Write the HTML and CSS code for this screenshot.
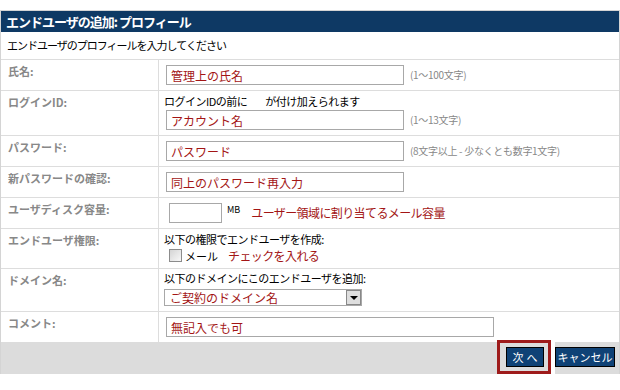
FILE: index.html
```html
<!DOCTYPE html>
<html lang="ja">
<head>
    <meta charset="UTF-8">
    <title>エンドユーザの追加: プロフィール</title>
    <link rel="stylesheet" href="styles.css">
</head>
<body>
    <div class="panel">
        <h1 class="panel-title">エンドユーザの追加: プロフィール</h1>
        <p class="panel-lead">エンドユーザのプロフィールを入力してください</p>

        <div class="row">
            <div class="label">氏名:</div>
            <div class="field">
                <div class="line">
                    <input class="text" type="text" value="管理上の氏名">
                    <span class="hint">(1〜100文字)</span>
                </div>
            </div>
        </div>

        <div class="row">
            <div class="label">ログインID:</div>
            <div class="field field-tall">
                <div class="note">ログインIDの前に<span class="blank"></span>が付け加えられます</div>
                <div class="line line-after">
                    <input class="text" type="text" value="アカウント名">
                    <span class="hint">(1〜13文字)</span>
                </div>
            </div>
        </div>

        <div class="row">
            <div class="label">パスワード:</div>
            <div class="field">
                <div class="line">
                    <input class="text" type="text" value="パスワード">
                    <span class="hint">(8文字以上 - 少なくとも数字1文字)</span>
                </div>
            </div>
        </div>

        <div class="row">
            <div class="label">新パスワードの確認:</div>
            <div class="field">
                <div class="line">
                    <input class="text" type="text" value="同上のパスワード再入力">
                </div>
            </div>
        </div>

        <div class="row">
            <div class="label">ユーザディスク容量:</div>
            <div class="field">
                <div class="line">
                    <input class="text text-small" type="text" value="">
                    <span class="unit">MB</span>
                    <span class="memo">ユーザー領域に割り当てるメール容量</span>
                </div>
            </div>
        </div>

        <div class="row">
            <div class="label">エンドユーザ権限:</div>
            <div class="field field-perm">
                <div class="note">以下の権限でエンドユーザを作成:</div>
                <div class="check-line">
                    <input class="check" type="checkbox">
                    <span>メール</span>
                    <span class="memo">チェックを入れる</span>
                </div>
            </div>
        </div>

        <div class="row">
            <div class="label">ドメイン名:</div>
            <div class="field field-domain">
                <div class="note">以下のドメインにこのエンドユーザを追加:</div>
                <div class="select">
                    <span class="select-value">ご契約のドメイン名</span>
                    <span class="select-arrow"><span class="tri"></span></span>
                </div>
            </div>
        </div>

        <div class="row">
            <div class="label">コメント:</div>
            <div class="field">
                <div class="line">
                    <input class="text text-wide" type="text" value="無記入でも可">
                </div>
            </div>
        </div>

        <div class="actions">
            <span class="mark"><button class="btn btn-next">次へ</button></span>
            <button class="btn btn-cancel">キャンセル</button>
        </div>
    </div>
</body>
</html>
```

FILE: styles.css
```css
body {
    margin: 0;
    background: #fff;
    font-family: "Noto Sans CJK JP", sans-serif;
    font-size: 11px;
    color: #000;
}

.panel {
    margin-top: 10px;
    border: 1px solid #d4d4d4;
    border-bottom: 0;
}

.panel-title {
    margin: 0;
    height: 21px;
    line-height: 21px;
    padding-left: 5px;
    background: #0e3964;
    color: #fff;
    font-size: 13px;
    font-weight: 700;
    letter-spacing: -1px;
}

.panel-lead {
    margin: 0;
    height: 27px;
    line-height: 26px;
    padding-left: 6px;
    letter-spacing: -1px;
}

.row {
    display: flex;
    border-top: 1px solid #dddddd;
}

.label {
    width: 158px;
    flex: none;
    box-sizing: border-box;
    padding: 4px 7px;
    line-height: 14px;
    border-right: 1px solid #dddddd;
    color: #888;
    font-weight: 700;
}

.field {
    flex: 1;
    padding: 5px 5px;
    line-height: 16px;
}

.field-tall { padding: 2px 5px 5px; }
.field-perm { padding: 2px 5px 4px; }
.field-domain { padding: 1px 5px 5px; }

.note {
    height: 16px;
    letter-spacing: -0.5px;
}

.blank {
    display: inline-block;
    width: 18px;
}

.line {
    display: flex;
    align-items: center;
    gap: 6px;
    height: 20px;
}

.line-after { margin-top: 1px; }

.text {
    width: 238px;
    height: 20px;
    margin: 0 0 0 2px;
    padding: 0 4px;
    box-sizing: border-box;
    border: 1px solid #a8a8a8;
    font-family: inherit;
    font-size: 12px;
    color: #a31515;
    background: #fff;
    outline: none;
}

.text-small {
    width: 53px;
    margin-left: 5px;
}

.text-wide { width: 328px; }

.hint {
    color: #888;
    font-size: 10px;
    letter-spacing: -0.3px;
}

.unit {
    align-self: flex-start;
    margin-left: -1px;
    font-size: 9px;
    line-height: 10px;
    margin-top: 2px;
}

.memo {
    color: #a31515;
    font-size: 12px;
    letter-spacing: -0.6px;
    margin-left: 5px;
}

.check-line {
    display: flex;
    align-items: center;
    height: 17px;
}

.check {
    appearance: none;
    width: 13px;
    height: 13px;
    margin: 0 3px 0 5px;
    box-sizing: border-box;
    border: 1px solid #8c8c8c;
    background: linear-gradient(135deg, #d4d4d4, #f8f8f8);
}

.check-line .memo { margin-left: 10px; }

.select {
    display: flex;
    align-items: center;
    width: 198px;
    height: 17px;
    margin-top: 3px;
    box-sizing: border-box;
    border: 1px solid #a8a8a8;
    background: #fff;
}

.select-value {
    flex: 1;
    padding-left: 5px;
    color: #a31515;
    font-size: 12px;
    line-height: 15px;
}

.select-arrow {
    display: flex;
    align-items: center;
    justify-content: center;
    width: 15px;
    height: 15px;
    box-sizing: border-box;
    border: 1px solid #888;
    background: #dedede;
}

.tri {
    width: 0;
    height: 0;
    border-left: 4px solid transparent;
    border-right: 4px solid transparent;
    border-top: 4px solid #000;
}

.actions {
    display: flex;
    justify-content: flex-end;
    align-items: flex-start;
    height: 32px;
    padding-right: 4px;
    background: #dcdcdc;
}

.mark {
    display: flex;
    margin-top: -2px;
    padding: 4px 4px 4px 6px;
    border: 3px solid #9e1b1b;
    box-shadow: 4px 0 0 #fff;
}

.btn {
    height: 20px;
    padding: 0;
    border: 1px solid #000;
    background: #0f4276;
    color: #fff;
    font-family: inherit;
    font-size: 11px;
    line-height: 18px;
    white-space: nowrap;
}

.btn-next {
    width: 38px;
    letter-spacing: 3px;
    text-indent: 3px;
}

.btn-cancel {
    width: 60px;
    margin: 5px 0 0 4px;
    letter-spacing: 0;
}
```
